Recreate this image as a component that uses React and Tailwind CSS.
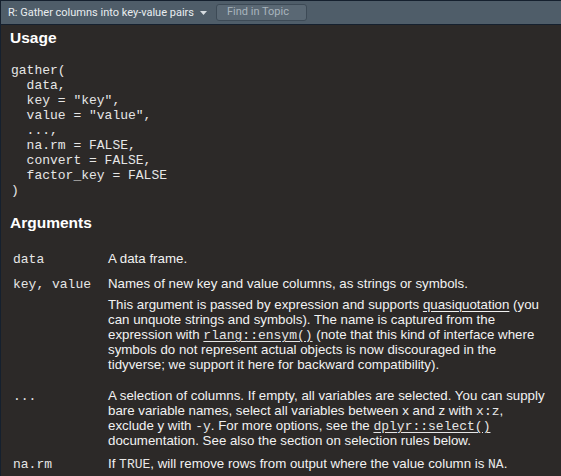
import React from 'react';

const body = { fontFamily: '"Liberation Sans", Arial, sans-serif' };
const mono = { fontFamily: '"Liberation Mono", "Courier New", monospace' };
const ui = { fontFamily: 'Roboto, "Noto Sans", sans-serif' };

const Code = ({ children, link }) => (
  <code
    className={`text-[13px] leading-[10px] text-[#e6e6e6] ${link ? 'underline underline-offset-2' : ''}`}
    style={mono}
  >
    {children}
  </code>
);

const usage = `gather(
  data,
  key = "key",
  value = "value",
  ...,
  na.rm = FALSE,
  convert = FALSE,
  factor_key = FALSE
)`;

const ArgRow = ({ name, className = '', children }) => (
  <div className={`flex ${className}`}>
    <div className="w-[98px] shrink-0 pl-[3px]">
      <Code>{name}</Code>
    </div>
    <div className="flex-1">{children}</div>
  </div>
);

const App = () => {
  return (
    <div className="w-[561px] h-[476px] overflow-hidden flex flex-col bg-[#2c2928] border-l border-[#15202e]">
      {/* Toolbar */}
      <div
        className="h-[25px] shrink-0 flex items-center pl-[7px] pt-[2px] bg-[#4f5d69] border-t border-b border-[#15202e]"
        style={ui}
      >
        <span className="text-[11px] text-[#e9edf0]">R: Gather columns into key-value pairs</span>
        <svg className="ml-[6px] mb-[2px]" width="7" height="4" viewBox="0 0 7 4">
          <path d="M0 0 L7 0 L3.5 4 Z" fill="#d6dce1" />
        </svg>
        <div className="ml-[9px] -mt-[3px] w-[91px] h-[17px] pl-[10px] flex items-center rounded-[3px] bg-[#5a6874] border border-[#3d4a56] text-[11px] text-[#a9b4bd]">
          Find in Topic
        </div>
      </div>

      {/* Help content */}
      <div className="flex-1 pl-[9px] pr-[12px] text-[13.3px] leading-[15px] text-[#f2f2f2]" style={body}>
        <h2 className="mt-[4px] text-[15.5px] leading-[18px] font-bold text-white">Usage</h2>
        <pre className="mt-[16px] pl-[1px] text-[13px] leading-[15px] text-[#e6e6e6]" style={mono}>
          {usage}
        </pre>

        <h2 className="mt-[16px] text-[15.5px] leading-[18px] font-bold text-white">Arguments</h2>

        <ArgRow name="data" className="mt-[19px]">
          <p>A data frame.</p>
        </ArgRow>

        <ArgRow name="key, value" className="mt-[10px]">
          <p>Names of new key and value columns, as strings or symbols.</p>
          <p className="mt-[6px]">
            This argument is passed by expression and supports{' '}
            <span className="underline underline-offset-2">quasiquotation</span> (you can unquote strings and
            symbols). The name is captured from the expression with <Code link>rlang::ensym()</Code> (note that
            this kind of interface where symbols do not represent actual objects is now discouraged in the
            tidyverse; we support it here for backward compatibility).
          </p>
        </ArgRow>

        <ArgRow name="..." className="mt-[16px]">
          <p>
            A selection of columns. If empty, all variables are selected. You can supply bare variable names,
            select all variables between x and z with <Code>x:z</Code>, exclude y with <Code>-y</Code>. For more
            options, see the <Code link>dplyr::select()</Code> documentation. See also the section on selection
            rules below.
          </p>
        </ArgRow>

        <ArgRow name="na.rm" className="mt-[8px]">
          <p>
            If <Code>TRUE</Code>, will remove rows from output where the value column is <Code>NA</Code>.
          </p>
        </ArgRow>
      </div>
    </div>
  );
};

export default App;
